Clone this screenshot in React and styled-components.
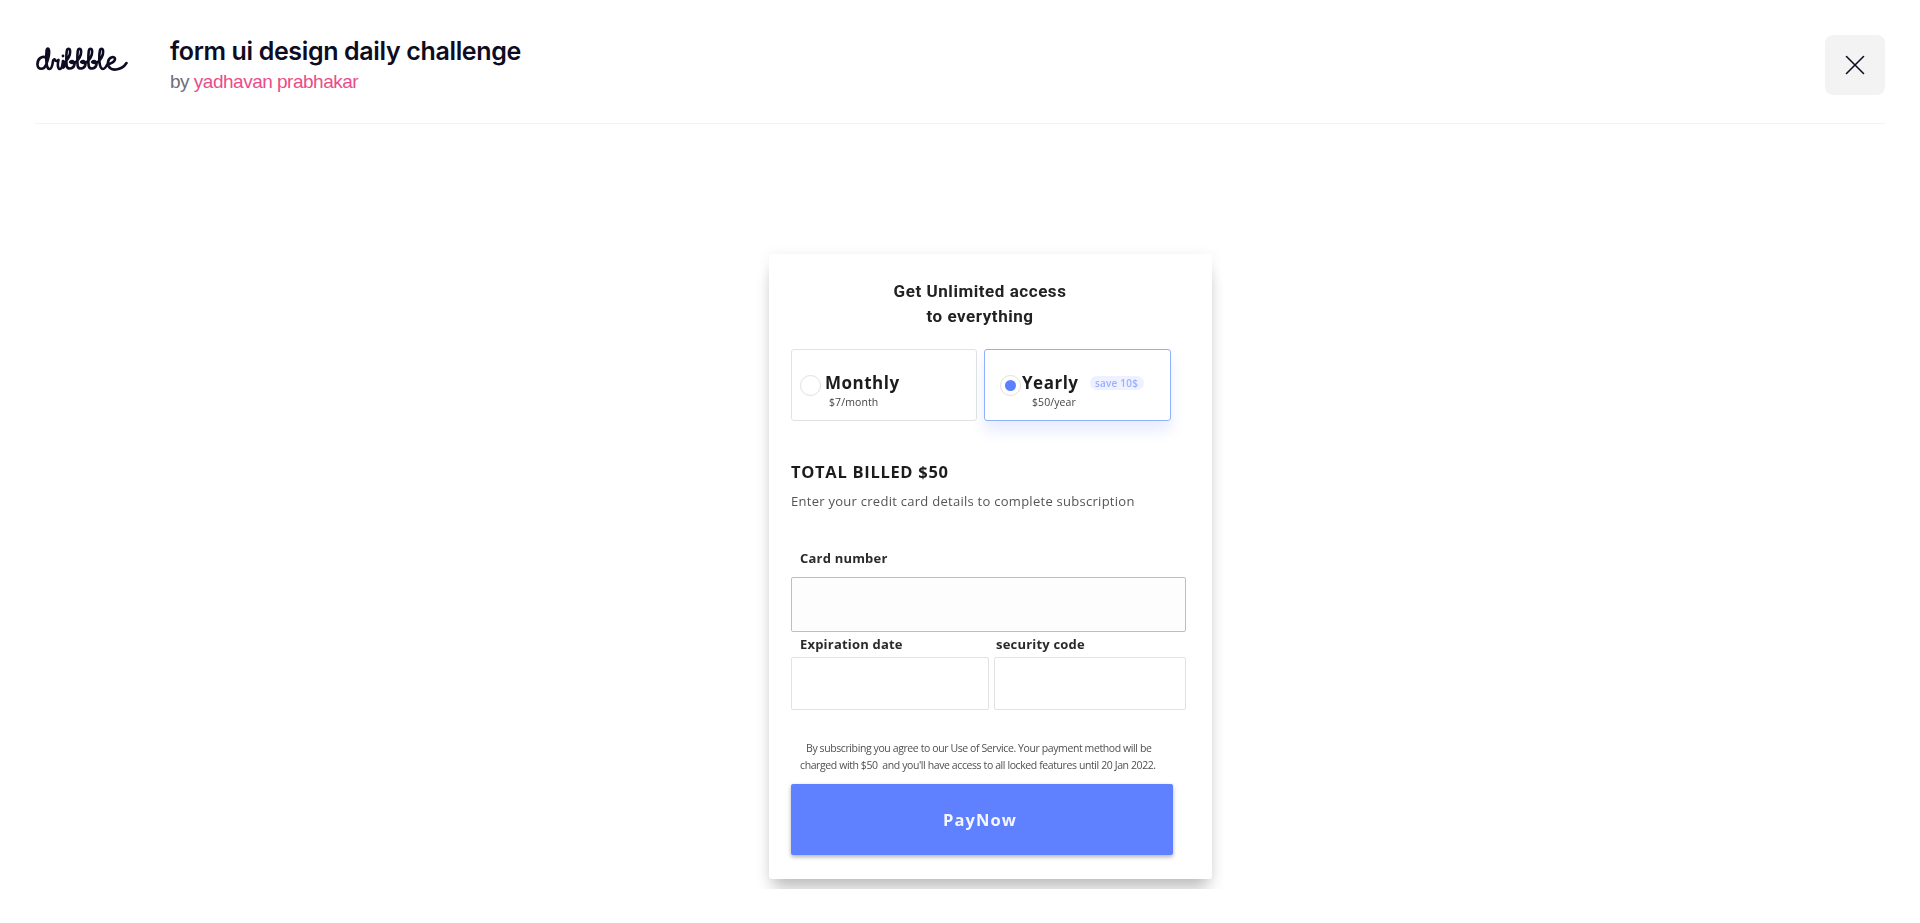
import React from "react";
import styled, { createGlobalStyle } from "styled-components";
import { X } from "lucide-react";

const GlobalStyle = createGlobalStyle`
  html, body {
    margin: 0;
    padding: 0;
    background: #fff;
  }
  body {
    font-family: Inter, "Liberation Sans", sans-serif;
    overflow: hidden;
  }
`;

const Page = styled.div`
  height: 923px;
  padding: 0 35px;
`;

const Header = styled.header`
  height: 123px;
  display: flex;
  align-items: flex-start;
  border-bottom: 1px solid #f3f3f4;
`;

const Logo = styled.svg`
  width: 92px;
  height: 24px;
  margin: 47px 0 0 1px;
  flex: none;
`;

const Heading = styled.div`
  margin-left: 42px;
  padding-top: 34px;
  flex: 1;
`;

const Title = styled.h1`
  margin: 0;
  font-size: 25px;
  line-height: 34px;
  font-weight: 600;
  letter-spacing: -0.35px;
  color: #0d0c22;
`;

const Byline = styled.div`
  margin-top: 1px;
  font-family: "Liberation Sans", Arial, sans-serif;
  font-size: 19px;
  line-height: 26px;
  letter-spacing: -0.5px;
  color: #6e6d7a;
`;

const Author = styled.a`
  color: #ea4c89;
`;

const CloseButton = styled.button`
  width: 60px;
  height: 60px;
  margin-top: 35px;
  border: 0;
  border-radius: 8px;
  background: #f3f3f4;
  color: #0d0c22;
  display: flex;
  align-items: center;
  justify-content: center;
  padding: 0;
`;

const Stage = styled.main`
  display: flex;
  justify-content: center;
  padding-left: 60px;
`;

const Shot = styled.div`
  width: 480px;
  height: 648px;
  margin-top: 117px;
  padding: 13px 0 0 19px;
  box-sizing: border-box;
  overflow: hidden;
  filter: blur(0.65px);
`;

const Card = styled.section`
  width: 443px;
  height: 625px;
  box-sizing: border-box;
  padding: 25px 26px 0 22px;
  border-radius: 3px;
  background: #fff;
  box-shadow: 0 14px 16px -4px rgba(0, 0, 0, 0.24), 0 0 14px rgba(0, 0, 0, 0.06);
  font-family: "Open Sans", sans-serif;
  color: #1b1b1b;
`;

const CardTitle = styled.h2`
  margin: 0 0 0 -17px;
  font-family: Roboto, sans-serif;
  font-size: 17px;
  line-height: 25px;
  font-weight: 700;
  letter-spacing: 0.55px;
  text-align: center;
  color: #222;
`;

const Plans = styled.div`
  display: flex;
  gap: 7px;
  margin-top: 20px;
`;

const Plan = styled.div`
  width: ${(p) => (p.$active ? 187 : 186)}px;
  height: 72px;
  box-sizing: border-box;
  display: flex;
  align-items: center;
  padding-left: ${(p) => (p.$active ? 15 : 8)}px;
  border: 1.5px solid ${(p) => (p.$active ? "#8fb2fb" : "#e2e2e2")};
  border-radius: 3px;
  box-shadow: ${(p) => (p.$active ? "0 10px 14px rgba(95, 128, 255, 0.14)" : "none")};
`;

const Radio = styled.span`
  width: 21px;
  height: 21px;
  flex: none;
  box-sizing: border-box;
  display: flex;
  align-items: center;
  justify-content: center;
  border: 1.5px solid #e0e0e0;
  border-radius: 50%;

  &::after {
    content: "";
    display: ${(p) => (p.$checked ? "block" : "none")};
    width: 11px;
    height: 11px;
    border-radius: 50%;
    background: #5b7fff;
  }
`;

const PlanText = styled.div`
  margin-left: ${(p) => p.$gap}px;
  padding-top: 11px;
`;

const PlanTop = styled.div`
  display: flex;
  align-items: center;
`;

const PlanName = styled.div`
  font-size: 17px;
  line-height: 24px;
  font-weight: 700;
  letter-spacing: 0.5px;
  color: #1c1c1c;
`;

const Badge = styled.span`
  margin-left: 11px;
  width: 54px;
  height: 14px;
  border-radius: 7px;
  background: #eef1ff;
  color: #9cb0ff;
  font-size: 10px;
  line-height: 14px;
  font-weight: 600;
  text-align: center;
  letter-spacing: 0.2px;
`;

const PlanPrice = styled.div`
  margin-left: ${(p) => p.$indent}px;
  font-size: 10.5px;
  line-height: 15px;
  letter-spacing: 0.1px;
  color: #444;
`;

const Total = styled.div`
  margin-top: 39px;
  font-size: 16.5px;
  line-height: 24px;
  font-weight: 700;
  letter-spacing: 0.7px;
  color: #1c1c1c;
`;

const Hint = styled.p`
  margin: 7px 0 0;
  font-size: 13px;
  line-height: 20px;
  letter-spacing: 0.27px;
  color: #555;
`;

const Label = styled.label`
  display: block;
  padding-left: ${(p) => p.$inset}px;
  font-size: 13px;
  line-height: 18px;
  font-weight: 700;
  letter-spacing: 0.2px;
  color: #2a2a2a;
`;

const CardNumber = styled.div`
  margin-top: 38px;
`;

const Input = styled.div`
  height: ${(p) => p.$height}px;
  box-sizing: border-box;
  border: 1.5px solid ${(p) => (p.$focused ? "#a9bdfb" : "#e2e2e2")};
  border-radius: 2px;
  background: ${(p) => (p.$focused ? "#fdfdfd" : "#fff")};
`;

const CardInput = styled(Input)`
  margin-top: 10px;
`;

const SplitRow = styled.div`
  display: grid;
  grid-template-columns: 198px 192px;
  column-gap: 5px;
  margin-top: 3px;
`;

const FieldInput = styled(Input)`
  margin-top: 4px;
`;

const Legal = styled.p`
  margin: 30px 0 0 9px;
  font-size: 10.5px;
  line-height: 16.5px;
  letter-spacing: -0.4px;
  color: #505050;
  text-indent: 6px;
  white-space: pre;
`;

const PayButton = styled.button`
  display: block;
  width: 382px;
  height: 71px;
  margin-top: 11px;
  padding: 0 4px 0 0;
  border: 0;
  border-radius: 2px;
  background: #5f80ff;
  box-shadow: 0 2px 4px rgba(0, 0, 0, 0.3);
  color: #f4f6ff;
  font-family: "Open Sans", sans-serif;
  font-size: 16.5px;
  font-weight: 700;
  letter-spacing: 1.1px;
`;

// one looped "b" of the logo, advances 11 units along the line
const logoB = "c3-3 5.5-8 5-11.5c-.4-2.5-2.6-2-3-.5c-.8 3-.8 13-.3 16c.6 3.5 6 3.5 7.5-.5c1-3-1.5-6-4-3.5c1.5 1.5 4 1 5.8 0";

const DribbbleLogo = () => (
  <Logo viewBox="0 0 92 24" fill="none" aria-label="dribbble">
    <path
      d={`M10.5 11C6 8 1 12 1.5 18C2 23 8 23 10 18C12 13 13.5 7 13 3.5C12.5 .5 10.5 1 10.5 5C10 11 10 22 13.5 22C15.5 22 16.5 18 17 14C17.5 12 18.5 12 19 13C20 14.5 21.5 14 22.5 13C21.5 17 21.5 22 24 22C26 22 26.5 18 27 14C26.5 19 26.5 22 28 20C28.6 19 29 17 29 15${logoB}${logoB}${logoB}c3-3 5.5-8 5-11.5c-.4-2.5-2.6-2-3-.5C63 8 62.5 22 67 22C69 22 70.5 19 71.5 17C74 17 79 15 79 12C79 9 73 9.5 72 15C71.5 21 76 23 80 22.5C84 22 88 20 90.5 16`}
      stroke="#0d0c22"
      strokeWidth="2.6"
      strokeLinecap="round"
      strokeLinejoin="round"
    />
    <circle cx="27" cy="9" r="1.4" fill="#0d0c22" />
  </Logo>
);

const App = () => {
  return (
    <Page>
      <GlobalStyle />
      <Header>
        <DribbbleLogo />
        <Heading>
          <Title>form ui design daily challenge</Title>
          <Byline>
            by <Author>yadhavan prabhakar</Author>
          </Byline>
        </Heading>
        <CloseButton aria-label="close">
          <X size={34} strokeWidth={1.15} />
        </CloseButton>
      </Header>
      <Stage>
        <Shot>
          <Card>
            <CardTitle>
              Get Unlimited access
              <br />
              to everything
            </CardTitle>
            <Plans>
              <Plan>
                <Radio />
                <PlanText $gap={4}>
                  <PlanName>Monthly</PlanName>
                  <PlanPrice $indent={4}>$7/month</PlanPrice>
                </PlanText>
              </Plan>
              <Plan $active>
                <Radio $checked />
                <PlanText $gap={1}>
                  <PlanTop>
                    <PlanName>Yearly</PlanName>
                    <Badge>save 10$</Badge>
                  </PlanTop>
                  <PlanPrice $indent={10}>$50/year</PlanPrice>
                </PlanText>
              </Plan>
            </Plans>
            <Total>TOTAL BILLED $50</Total>
            <Hint>Enter your credit card details to complete subscription</Hint>
            <CardNumber>
              <Label $inset={9}>Card number</Label>
              <CardInput $height={55} $focused />
            </CardNumber>
            <SplitRow>
              <div>
                <Label $inset={9}>Expiration date</Label>
                <FieldInput $height={53} />
              </div>
              <div>
                <Label $inset={2}>security code</Label>
                <FieldInput $height={53} />
              </div>
            </SplitRow>
            <Legal>
              {"By subscribing you agree to our Use of Service. Your payment method will be\ncharged with $50  and you'll have access to all locked features until 20 Jan 2022."}
            </Legal>
            <PayButton>PayNow</PayButton>
          </Card>
        </Shot>
      </Stage>
    </Page>
  );
};

export default App;
